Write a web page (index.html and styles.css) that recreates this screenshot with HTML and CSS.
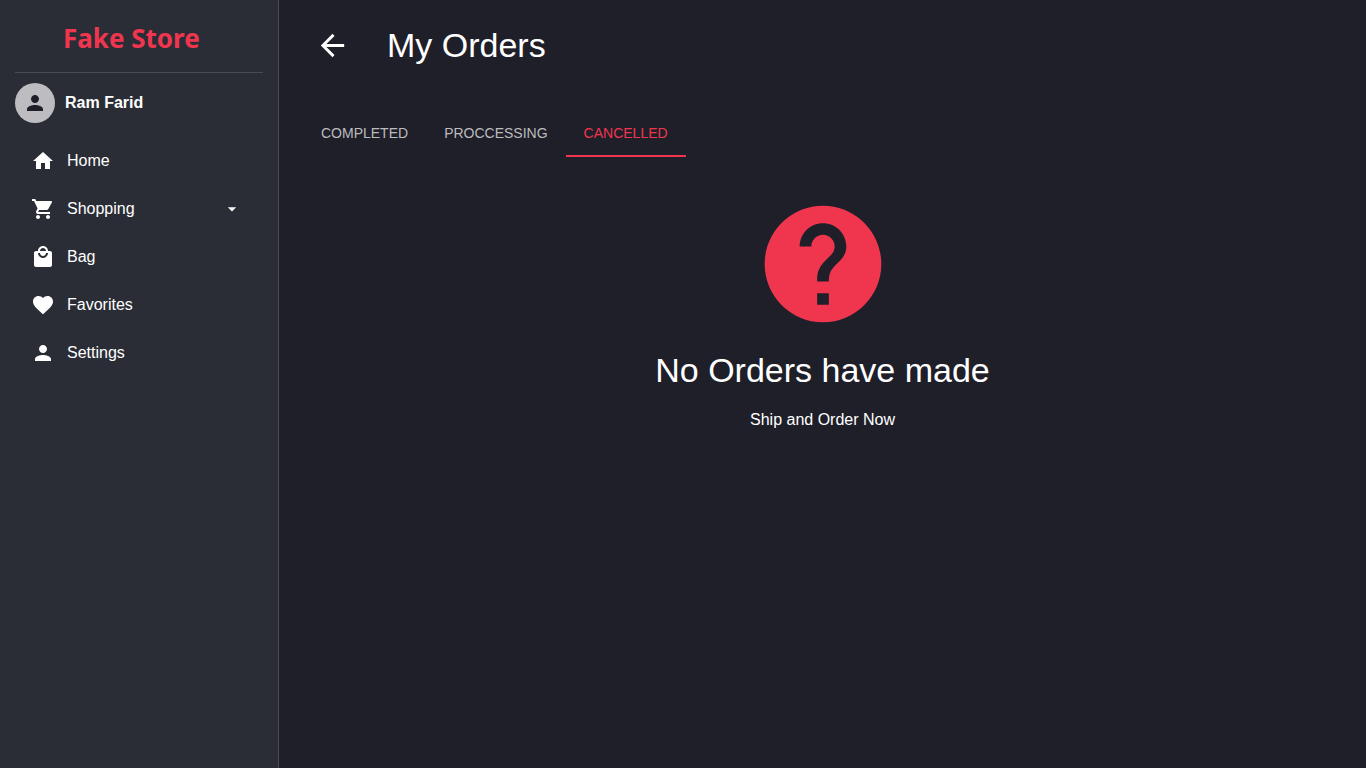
FILE: index.html
```
<!DOCTYPE html>
<html lang="en">
<head>
    <meta charset="UTF-8">
    <meta name="viewport" content="width=device-width, initial-scale=1.0">
    <title>Fake Store - My Orders</title>
    <link rel="stylesheet" href="styles.css">
</head>
<body>

    <aside class="sidebar">
        <a class="logo" href="#">Fake Store</a>
        <hr class="divider">
        <div class="user">
            <span class="avatar">
                <svg class="avatar-icon" viewBox="0 0 24 24"><path d="M12 12c2.21 0 4-1.79 4-4s-1.79-4-4-4-4 1.79-4 4 1.79 4 4 4zm0 2c-2.67 0-8 1.34-8 4v2h16v-2c0-2.66-5.33-4-8-4z"/></svg>
            </span>
            <span class="user-name">Ram Farid</span>
        </div>
        <nav class="menu">
            <a class="menu-item" href="#">
                <svg class="icon" viewBox="0 0 24 24"><path d="M10 20v-6h4v6h5v-8h3L12 3 2 12h3v8z"/></svg>
                <span>Home</span>
            </a>
            <button class="menu-item" type="button">
                <svg class="icon" viewBox="0 0 24 24"><path d="M7 18c-1.1 0-1.99.9-1.99 2S5.9 22 7 22s2-.9 2-2-.9-2-2-2zM1 2v2h2l3.6 7.59-1.35 2.45c-.16.28-.25.61-.25.96 0 1.1.9 2 2 2h12v-2H7.42c-.14 0-.25-.11-.25-.25l.03-.12.9-1.63h7.45c.75 0 1.41-.41 1.75-1.03l3.58-6.49c.08-.14.12-.31.12-.48 0-.55-.45-1-1-1H5.21l-.94-2H1zm16 16c-1.1 0-1.99.9-1.99 2s.89 2 1.99 2 2-.9 2-2-.9-2-2-2z"/></svg>
                <span>Shopping</span>
                <svg class="caret" viewBox="0 0 24 24"><path d="M7 10l5 5 5-5z"/></svg>
            </button>
            <a class="menu-item" href="#">
                <svg class="icon" viewBox="0 0 24 24"><path d="M19 6h-2c0-2.76-2.24-5-5-5S7 3.24 7 6H5c-1.1 0-1.99.9-1.99 2L3 20c0 1.1.9 2 2 2h14c1.1 0 2-.9 2-2V8c0-1.1-.9-2-2-2zm-7-3c1.66 0 3 1.34 3 3H9c0-1.66 1.34-3 3-3zm0 10c-2.76 0-5-2.24-5-5h2c0 1.66 1.34 3 3 3s3-1.34 3-3h2c0 2.76-2.24 5-5 5z"/></svg>
                <span>Bag</span>
            </a>
            <a class="menu-item" href="#">
                <svg class="icon" viewBox="0 0 24 24"><path d="M12 21.35l-1.45-1.32C5.4 15.36 2 12.28 2 8.5 2 5.42 4.42 3 7.5 3c1.74 0 3.41.81 4.5 2.09C13.09 3.81 14.76 3 16.5 3 19.58 3 22 5.42 22 8.5c0 3.78-3.4 6.86-8.55 11.54L12 21.35z"/></svg>
                <span>Favorites</span>
            </a>
            <a class="menu-item" href="#">
                <svg class="icon" viewBox="0 0 24 24"><path d="M12 12c2.21 0 4-1.79 4-4s-1.79-4-4-4-4 1.79-4 4 1.79 4 4 4zm0 2c-2.67 0-8 1.34-8 4v2h16v-2c0-2.66-5.33-4-8-4z"/></svg>
                <span>Settings</span>
            </a>
        </nav>
    </aside>

    <main class="content">
        <header class="page-header">
            <button class="back-button" type="button" aria-label="Back">
                <svg class="back-icon" viewBox="0 0 24 24"><path d="M20 11H7.83l5.59-5.59L12 4l-8 8 8 8 1.41-1.41L7.83 13H20v-2z"/></svg>
            </button>
            <h1 class="title">My Orders</h1>
        </header>

        <div class="tabs" role="tablist">
            <button class="tab" type="button" role="tab" aria-selected="false">Completed</button>
            <button class="tab" type="button" role="tab" aria-selected="false">Proccessing</button>
            <button class="tab active" type="button" role="tab" aria-selected="true">Cancelled</button>
        </div>

        <section class="empty">
            <svg class="empty-icon" viewBox="0 0 24 24"><path d="M12 2C6.48 2 2 6.48 2 12s4.48 10 10 10 10-4.48 10-10S17.52 2 12 2zm1 17h-2v-2h2v2zm2.07-7.75l-.9.92C13.45 12.9 13 13.5 13 15h-2v-.5c0-1.1.45-2.1 1.17-2.83l1.24-1.26c.37-.36.59-.86.59-1.41 0-1.1-.9-2-2-2s-2 .9-2 2H8c0-2.21 1.79-4 4-4s4 1.79 4 4c0 .88-.36 1.68-.93 2.25z"/></svg>
            <h2 class="title">No Orders have made</h2>
            <p class="empty-text">Ship and Order Now</p>
        </section>
    </main>

</body>
</html>
```
FILE: styles.css
```
* {
    box-sizing: border-box;
}
body {
    margin: 0;
    display: flex;
    min-height: 100vh;
    font-family: "Liberation Sans", Arial, sans-serif;
    font-size: 16px;
    line-height: 24px;
    color: #fff;
    background-color: #1f1f29;
}
svg {
    display: block;
    fill: currentColor;
}
button {
    font: inherit;
    color: inherit;
    background: none;
    border: none;
    cursor: pointer;
}
.sidebar {
    flex: 0 0 279px;
    padding: 0 15px;
    background-color: #2b2d36;
    border-right: 1px solid #494a52;
}
.logo {
    display: block;
    padding: 18px 0 14px 48px;
    font-family: "Noto Sans", sans-serif;
    font-size: 26px;
    font-weight: 700;
    line-height: 40px;
    color: #f0364f;
    text-decoration: none;
}
.divider {
    margin: 0;
    border: none;
    border-top: 1px solid #494a52;
}
.user {
    display: flex;
    align-items: center;
    gap: 10px;
    padding: 10px 0;
}
.avatar {
    display: flex;
    align-items: center;
    justify-content: center;
    width: 40px;
    height: 40px;
    border-radius: 50%;
    color: #1f1f29;
    background-color: #bdbdc1;
}
.avatar-icon {
    width: 24px;
    height: 24px;
}
.user-name {
    font-weight: 700;
}
.menu {
    padding-top: 4px;
}
.menu-item {
    display: flex;
    align-items: center;
    gap: 12px;
    width: 100%;
    height: 48px;
    padding: 0 21px 0 16px;
    color: #fff;
    text-decoration: none;
}
.icon {
    width: 24px;
    height: 24px;
}
.caret {
    width: 20px;
    height: 20px;
    margin-left: auto;
}
.content {
    flex: 1;
    padding: 16px 24px;
}
.page-header {
    display: flex;
    align-items: center;
    gap: 25px;
}
.back-button {
    padding: 12px;
}
.back-icon {
    width: 35px;
    height: 35px;
}
.title {
    margin: 0;
    padding-bottom: 2px;
    font-size: 34px;
    font-weight: 400;
    line-height: 40px;
}
.tabs {
    display: flex;
    margin-top: 34px;
}
.tab {
    height: 48px;
    padding: 2px 18px 0;
    border-bottom: 2px solid transparent;
    font-size: 14px;
    text-transform: uppercase;
    color: #bcbcbf;
}
.tab.active {
    color: #f0364f;
    border-bottom-color: #f0364f;
}
.empty {
    display: flex;
    flex-direction: column;
    align-items: center;
    padding-top: 37px;
    text-align: center;
}
.empty-icon {
    width: 140px;
    height: 140px;
    margin-bottom: 16px;
    color: #f0364f;
}
.empty-text {
    margin: 16px 0 0;
}
```
